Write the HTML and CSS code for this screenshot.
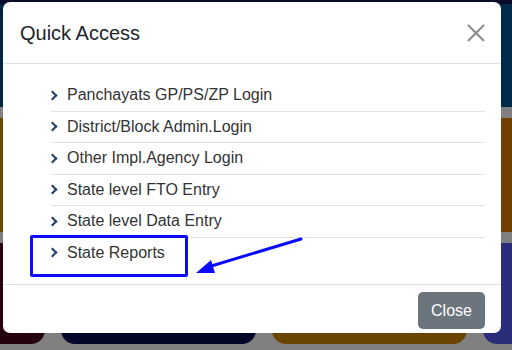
FILE: index.html
```html
<!DOCTYPE html>
<html lang="en">
<head>
    <meta charset="UTF-8">
    <meta name="viewport" content="width=device-width, initial-scale=1.0">
    <title>Quick Access</title>
    <link rel="stylesheet" href="styles.css">
</head>
<body>
    <div class="page">
        <div class="topbar"></div>
        <div class="tile-row row-one">
            <div class="tile navy"></div>
            <div class="tile"></div>
            <div class="tile"></div>
            <div class="tile deep-blue"></div>
        </div>
        <div class="tile-row row-two">
            <div class="tile ochre"></div>
            <div class="tile"></div>
            <div class="tile"></div>
            <div class="tile rust"></div>
        </div>
        <div class="tile-row row-three">
            <div class="tile maroon"></div>
            <div class="tile midnight"></div>
            <div class="tile brown"></div>
            <div class="tile indigo"></div>
        </div>
    </div>

    <div class="modal">
        <div class="modal-header">
            <h5 class="modal-title">Quick Access</h5>
            <button class="btn-x" aria-label="Close">
                <svg width="18" height="18" viewBox="0 0 18 18">
                    <path d="M1 1 L17 17 M17 1 L1 17" stroke="#8a8a8a" stroke-width="2" fill="none"/>
                </svg>
            </button>
        </div>
        <div class="modal-body">
            <ul class="links">
                <li><span class="chev"></span>Panchayats GP/PS/ZP Login</li>
                <li><span class="chev"></span>District/Block Admin.Login</li>
                <li><span class="chev"></span>Other Impl.Agency Login</li>
                <li><span class="chev"></span>State level FTO Entry</li>
                <li><span class="chev"></span>State level Data Entry</li>
                <li class="last"><span class="chev"></span>State Reports</li>
            </ul>
            <div class="mark-box"></div>
            <svg class="mark-arrow" width="110" height="40" viewBox="0 0 110 40">
                <line x1="107" y1="2" x2="14" y2="30" stroke="#0a0aff" stroke-width="3" stroke-linecap="round"/>
                <polygon points="2,36 17,23 21,36" fill="#0a0aff"/>
            </svg>
        </div>
        <div class="modal-footer">
            <button class="btn-close">Close</button>
        </div>
    </div>
</body>
</html>
```

FILE: styles.css
```css
body {
    margin: 0;
    font-family: "Liberation Sans", Arial, sans-serif;
    background-color: #808080;
    width: 512px;
    height: 350px;
    overflow: hidden;
}
.page {
    height: 350px;
    width: 512px;
    overflow: hidden;
}
.topbar {
    height: 4px;
    background-color: #0b0b2c;
}
.tile-row {
    display: flex;
    gap: 16px;
    margin-left: -150px;
}
.tile {
    flex: 0 0 195px;
    border-radius: 14px;
}
.row-one {
    height: 103px;
    margin-bottom: 11px;
}
.row-two {
    height: 114px;
    margin-bottom: 11px;
}
.row-three {
    height: 101px;
}
.navy { background-color: #00263f; }
.deep-blue { background-color: #002a4a; }
.ochre { background-color: #6b4a00; }
.rust { background-color: #733e00; }
.maroon { background-color: #25000f; }
.midnight { background-color: #010628; }
.brown { background-color: #694500; }
.indigo { background-color: #2a2e7a; }

.modal {
    position: absolute;
    left: 3px;
    top: 2px;
    width: 498px;
    height: 331px;
    background-color: #fff;
    border-radius: 7px;
    display: flex;
    flex-direction: column;
}
.modal-header {
    display: flex;
    align-items: center;
    justify-content: space-between;
    padding: 16px 16px 15px 17px;
    border-bottom: 1px solid #dee2e6;
}
.modal-title {
    margin: 0;
    font-size: 20px;
    font-weight: normal;
    line-height: 30px;
    color: #212529;
}
.btn-x {
    border: none;
    background: none;
    padding: 0;
    width: 18px;
    height: 18px;
    display: flex;
}
.modal-body {
    position: relative;
    padding: 16px 16px 0;
    height: 204px;
    border-bottom: 1px solid #dee2e6;
}
.links {
    list-style: none;
    margin: 0;
    padding-left: 32px;
}
.links li {
    display: flex;
    align-items: center;
    padding: 5px 0;
    line-height: 20.5px;
    font-size: 16px;
    color: #333;
    border-bottom: 1px solid #e3e3e3;
}
.links li.last {
    border-bottom: none;
}
.chev {
    width: 5px;
    height: 5px;
    border-top: 2.5px solid #1d3f6b;
    border-right: 2.5px solid #1d3f6b;
    transform: rotate(45deg);
    margin: 0 11px 0 -2px;
}
.mark-box {
    position: absolute;
    left: 27px;
    top: 171px;
    width: 152px;
    height: 36px;
    border: 3px solid #0a0aff;
    border-radius: 2px;
}
.mark-arrow {
    position: absolute;
    left: 191px;
    top: 173px;
}
.modal-footer {
    display: flex;
    justify-content: flex-end;
    padding: 7px 16px 0;
}
.btn-close {
    font-family: "Liberation Sans", Arial, sans-serif;
    font-size: 16px;
    color: #fff;
    background-color: #6c757d;
    border: none;
    border-radius: 5px;
    width: 67px;
    height: 37px;
}
```
